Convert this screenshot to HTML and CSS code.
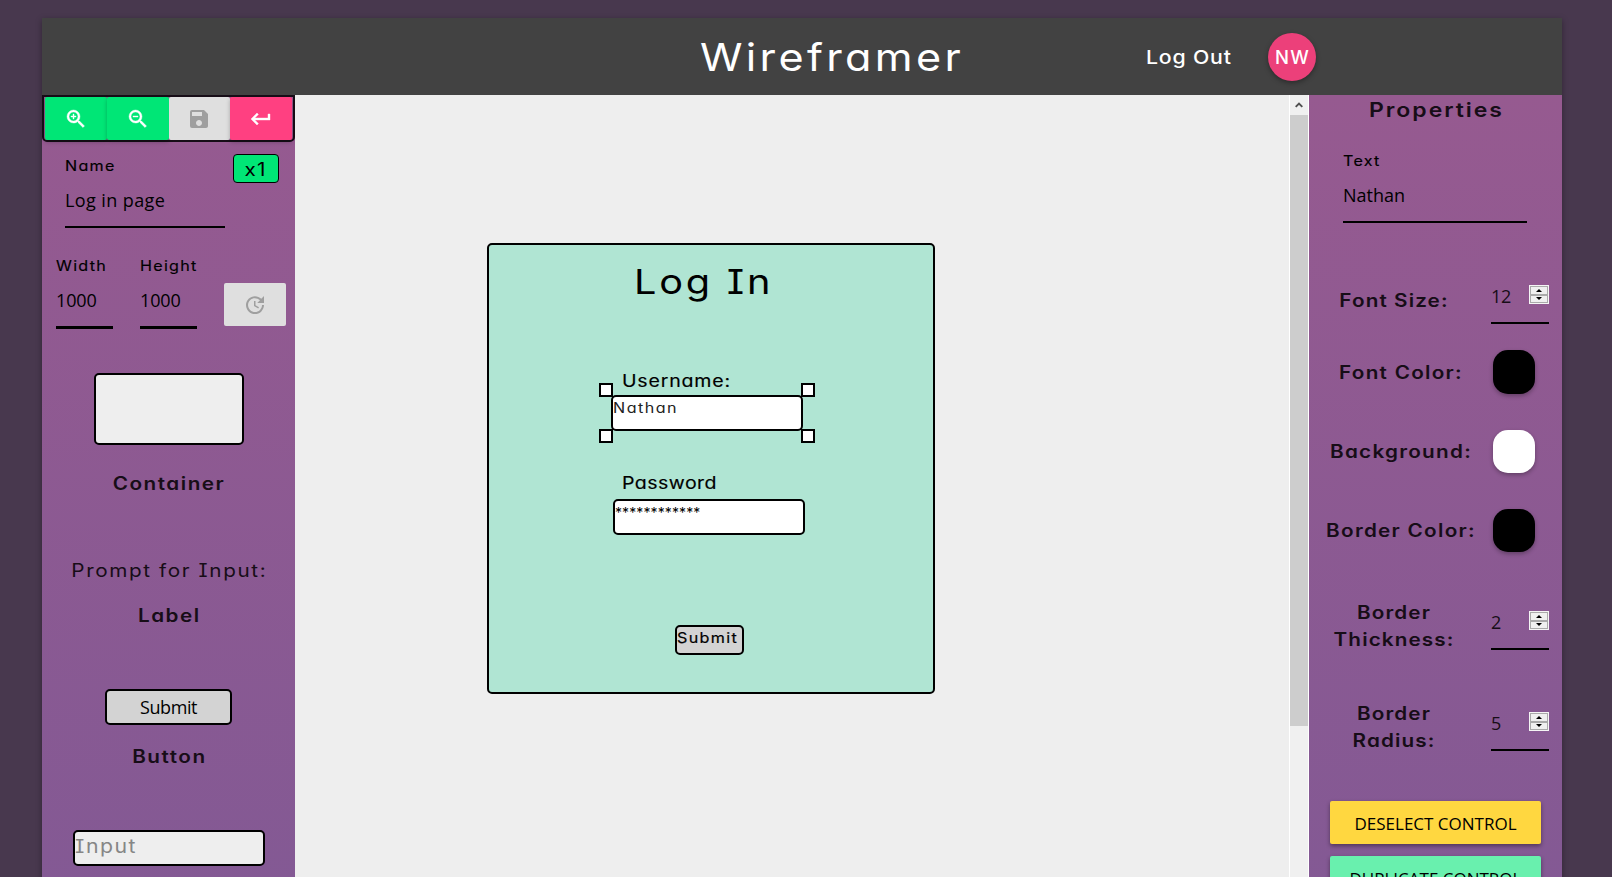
FILE: index.html
```html
<!DOCTYPE html>
<html lang="en">
<head>
<meta charset="utf-8">
<title>Wireframer</title>
<link rel="stylesheet" href="styles.css">
</head>
<body>
<div class="shell">
  <header class="nav">
    <div class="brand wide">Wireframer</div>
    <div class="logout"><span class="wide">Log Out</span></div>
    <div class="avatar">NW</div>
  </header>
  <main class="editor">
    <aside class="panel tools">
      <div class="toolbar">
        <button class="tool green"><svg viewBox="0 0 24 24"><path d="M15.5 14h-.79l-.28-.27A6.47 6.47 0 0 0 16 9.5 6.5 6.5 0 1 0 9.5 16c1.61 0 3.09-.59 4.23-1.57l.27.28v.79l5 4.99L20.49 19l-4.99-5zm-6 0C7.01 14 5 11.99 5 9.5S7.01 5 9.5 5 14 7.01 14 9.5 11.99 14 9.5 14zm2.5-4h-2v2H9v-2H7V9h2V7h1v2h2v1z"/></svg></button>
        <button class="tool green"><svg viewBox="0 0 24 24"><path d="M15.5 14h-.79l-.28-.27A6.47 6.47 0 0 0 16 9.5 6.5 6.5 0 1 0 9.5 16c1.61 0 3.09-.59 4.23-1.57l.27.28v.79l5 4.99L20.49 19l-4.99-5zm-6 0C7.01 14 5 11.99 5 9.5S7.01 5 9.5 5 14 7.01 14 9.5 11.99 14 9.5 14zM7 9h5v1H7z"/></svg></button>
        <button class="tool disabled"><svg viewBox="0 0 24 24"><path d="M17 3H5a2 2 0 0 0-2 2v14a2 2 0 0 0 2 2h14c1.1 0 2-.9 2-2V7l-4-4zm-5 16c-1.66 0-3-1.34-3-3s1.34-3 3-3 3 1.34 3 3-1.34 3-3 3zm3-10H5V5h10v4z"/></svg></button>
        <button class="tool pink"><svg viewBox="0 0 24 24"><path d="M19 7v4H5.83l3.58-3.59L8 6l-6 6 6 6 1.41-1.41L5.83 13H21V7z"/></svg></button>
      </div>
      <div class="name-row">
        <label class="field name-field"><span class="caption wide">Name</span><span class="value page-name">Log in page</span></label>
        <span class="zoom-badge"><span class="wide">x1</span></span>
      </div>
      <div class="size-row">
        <label class="field dim"><span class="caption wide">Width</span><span class="value">1000</span></label>
        <label class="field dim"><span class="caption wide">Height</span><span class="value">1000</span></label>
        <button class="tool disabled refresh"><svg viewBox="0 0 24 24"><path d="M21 10.12h-6.78l2.74-2.82c-2.73-2.7-7.15-2.8-9.88-.1-2.73 2.71-2.73 7.08 0 9.79s7.15 2.71 9.88 0C18.32 15.65 19 14.08 19 12.1h2c0 1.98-.88 4.55-2.64 6.29-3.51 3.48-9.21 3.48-12.72 0-3.5-3.47-3.53-9.11-.02-12.58s9.14-3.47 12.65 0L21 3v7.12zM12.5 8v4.25l3.5 2.08-.72 1.21L11 13V8h1.5z"/></svg></button>
      </div>
      <div class="sample-box"></div>
      <div class="tool-name after-box wide">Container</div>
      <div class="sample-label wide">Prompt for Input:</div>
      <div class="tool-name after-label wide">Label</div>
      <div class="sample-button">Submit</div>
      <div class="tool-name after-button wide">Button</div>
      <div class="sample-input"><span class="wide">Input</span></div>
    </aside>

    <section class="canvas">
      <div class="node frame"></div>
      <div class="node title wide">Log In</div>
      <div class="node user-label wide">Username:</div>
      <div class="node pass-label wide">Password</div>
      <div class="node input user-input"><span class="wide">Nathan</span>
        <i class="handle tl"></i><i class="handle tr"></i><i class="handle bl"></i><i class="handle br"></i>
      </div>
      <div class="node input pass-input">************</div>
      <div class="node input submit"><span class="wide">Submit</span></div>
    </section>
    <div class="scrollbar">
      <div class="scroll-arrow"><svg viewBox="0 0 8 6"><path d="M.7 4.8 4 1.5l3.3 3.3" fill="none" stroke="#505050" stroke-width="1.9"/></svg></div>
      <div class="thumb"></div>
    </div>

    <aside class="panel props">
      <h2 class="heading wide">Properties</h2>
      <label class="field text-field"><span class="caption wide">Text</span><span class="value">Nathan</span></label>
      <div class="prop number size"><span class="prop-name wide">Font Size:</span><span class="num">12<span class="spin"><b></b><b class="down"></b></span></span></div>
      <div class="prop color c1"><span class="prop-name wide">Font Color:</span><span class="swatch black"></span></div>
      <div class="prop color c2"><span class="prop-name wide">Background:</span><span class="swatch white"></span></div>
      <div class="prop color c3"><span class="prop-name wide">Border Color:</span><span class="swatch black"></span></div>
      <div class="prop number thick"><span class="prop-name wide">Border<br>Thickness:</span><span class="num">2<span class="spin"><b></b><b class="down"></b></span></span></div>
      <div class="prop number radius"><span class="prop-name wide">Border<br>Radius:</span><span class="num">5<span class="spin"><b></b><b class="down"></b></span></span></div>
      <button class="action deselect">DESELECT CONTROL</button>
      <button class="action duplicate">DUPLICATE CONTROL</button>
    </aside>
  </main>
</div>
</body>
</html>
```
FILE: styles.css
```css
* { box-sizing: border-box; }
html, body { height: 100%; overflow: hidden; }
body {
  margin: 0;
  padding: 18px 50px 0 42px;
  background: #48384e;
  font-family: Inter, "DejaVu Sans", sans-serif;
  font-feature-settings: "cv11", "cv08", "calt" 0;
  letter-spacing: 1px;
  color: #000;
  white-space: nowrap;
}
button { border: 0; padding: 0; font: inherit; color: inherit; }

.wide { display: inline-block; transform: scaleX(1.15); transform-origin: 0 50%; }

.shell {
  width: 1520px;
  height: 880px;
  box-shadow: 0 2px 6px rgba(0, 0, 0, .35);
}
.nav {
  height: 77px;
  display: flex;
  align-items: center;
  padding-left: 658px;
  background: #424242;
  color: #fff;
}
.brand { width: 446px; padding-top: 1px; font-size: 37.5px; letter-spacing: 2.9px; }
.logout { width: 122px; font-size: 18.5px; font-weight: 450; letter-spacing: .7px; }
.avatar {
  width: 48px;
  height: 48px;
  border-radius: 50%;
  background: #ec407a;
  display: grid;
  place-items: center;
  font-size: 18.5px;
  font-weight: 500;
  letter-spacing: 1.2px;
  text-indent: 1px;
  box-shadow: 0 2px 5px rgba(0, 0, 0, .35);
}
.editor { display: flex; height: 803px; }
.panel {
  display: flex;
  flex-direction: column;
  width: 253px;
  height: 803px;
  overflow: hidden;
  background: linear-gradient(#965a90, #835994);
}
.tools { align-items: center; }

/* Toolbar */
.toolbar {
  width: 253px;
  height: 47px;
  flex: none;
  display: flex;
  padding: 0 1px;
  border: 2px solid #170d17;
  border-radius: 0 0 5px 5px;
}
.tool {
  flex: 1;
  height: 43px;
  border-radius: 2px;
  display: grid;
  place-items: center;
  box-shadow: 0 2px 4px rgba(0, 0, 0, .25);
}
.tool svg { width: 24px; height: 24px; fill: #fff; stroke: #fff; stroke-width: .4px; }
.green { background: #00e676; }
.pink { background: #ff4081; }
.disabled { background: #dfdfdf; box-shadow: none; }
.tool.disabled svg { fill: #9f9f9f; stroke: none; }

/* Underlined fields */
.field { display: flex; flex-direction: column; border-bottom: 2px solid #000; }
.caption { font-size: 14px; line-height: 20px; letter-spacing: 1.1px; -webkit-text-stroke: .15px #000; }
.value, .num, .sample-button, .action {
  font-family: "Open Sans", "Noto Sans", sans-serif;
  letter-spacing: 0;
}
.value { font-size: 18px; line-height: 24px; margin-top: 12px; }
.page-name { letter-spacing: .4px; }
.name-row { width: 253px; height: 88px; flex: none; display: flex; padding-left: 23px; }
.name-field { width: 160px; height: 72px; margin: 14px 8px 0 0; }
.zoom-badge {
  width: 46px;
  height: 29px;
  margin-top: 12px;
  background: #00e676;
  border: 1px solid #000;
  border-radius: 4px;
  font-size: 18px;
  line-height: 29px;
  text-align: center;
}
.zoom-badge .wide { transform-origin: 50% 50%; }
.size-row {
  width: 253px;
  height: 99px;
  flex: none;
  display: flex;
  align-items: flex-start;
  gap: 27px;
  padding: 26px 0 0 14px;
}
.dim { width: 57px; height: 73px; border-bottom-width: 3px; }
.dim .value { letter-spacing: -.15px; }
.refresh { flex: none; width: 62px; margin-top: 27px; }

/* Component samples */
.sample-box {
  flex: none;
  width: 150px;
  height: 72px;
  margin: 44px 0 0 1px;
  border: 2px solid #000;
  border-radius: 5px;
  background: #eee;
}
.tool-name, .sample-label { font-size: 18px; line-height: 24px; color: #170d17; transform-origin: 50% 50%; }
.tool-name { font-weight: 600; letter-spacing: 1.3px; text-indent: 1px; }
.sample-label { margin-top: 63px; letter-spacing: 1.4px; text-indent: 1px; }
.after-box { margin-top: 27px; }
.after-label { margin-top: 21px; }
.sample-button {
  flex: none;
  width: 127px;
  height: 36px;
  margin-top: 61px;
  border: 2px solid #000;
  border-radius: 5px;
  background: #d3d3d3;
  font-size: 18px;
  line-height: 32px;
  text-align: center;
  letter-spacing: -.4px;
}
.after-button { margin-top: 20px; }
.sample-input {
  flex: none;
  width: 192px;
  height: 36px;
  margin-top: 61px;
  border: 2px solid #000;
  border-radius: 5px;
  background: #eee;
  color: #868686;
  font-size: 18.5px;
  line-height: 28px;
  letter-spacing: 1.3px;
}

/* Free canvas */
.canvas { position: relative; width: 994px; background: #eee; }
.node { position: absolute; }
.frame { left: 192px; top: 148px; width: 448px; height: 451px; background: #b0e5d3; border: 2px solid #000; border-radius: 5px; }
.title { left: 339px; top: 167px; font-size: 34.5px; line-height: 40px; letter-spacing: 2.4px; }
.user-label, .pass-label { left: 327px; font-size: 17px; line-height: 21px; letter-spacing: .7px; -webkit-text-stroke: .15px #000; }
.user-label { top: 276px; }
.pass-label { top: 378px; letter-spacing: .4px; }
.input { border: 2px solid #000; border-radius: 5px; background: #fff; width: 192px; height: 36px; font-size: 14px; line-height: 22px; }
.user-input { left: 316px; top: 300px; letter-spacing: 1.3px; color: #222; }
.pass-input { left: 318px; top: 404px; letter-spacing: .1px; line-height: 23px; }
.submit { left: 380px; top: 530px; width: 69px; height: 30px; background: #d3d3d3; letter-spacing: 1.2px; -webkit-text-stroke: .2px #000; }
.handle { position: absolute; width: 14px; height: 14px; border: 2px solid #000; background: #fff; }
.tl { left: -14px; top: -14px; }
.tr { right: -14px; top: -14px; }
.bl { left: -14px; bottom: -14px; }
.br { right: -14px; bottom: -14px; }

.scrollbar { width: 20px; border-left: 1px solid #fff; border-right: 1px solid #fff; background: #f0f0f0; }
.scroll-arrow { height: 20px; display: grid; place-items: center; }
.scroll-arrow svg { width: 8px; height: 6px; }
.thumb { height: 611px; background: #cdcdcd; }

/* Properties */
.heading { margin: 1px 0 0 60px; font-size: 20px; line-height: 28px; font-weight: 600; color: #170d17; letter-spacing: 1.7px; }
.text-field { width: 184px; height: 72px; flex: none; margin: 27px 0 0 34px; }
.prop { flex: none; display: flex; align-items: center; color: #170d17; }
.prop-name { text-align: center; font-size: 18px; line-height: 27px; font-weight: 600; letter-spacing: 1.1px; transform-origin: 50% 50%; }
.number .prop-name { width: 170px; margin-top: -8px; letter-spacing: .95px; }
.color .prop-name { width: 184px; }
.number { height: 54px; }
.size { margin-top: 54px; }
.num {
  position: relative;
  width: 58px;
  height: 40px;
  margin-left: 12px;
  border-bottom: 2px solid #000;
  font-size: 18px;
  line-height: 24px;
  letter-spacing: -.4px;
}
.spin {
  position: absolute;
  right: 0;
  top: 1px;
  width: 20px;
  height: 19px;
  padding: 1px;
  background: #f5f5f5;
  display: flex;
  flex-direction: column;
}
.spin b { flex: 1; border: 1px solid #aaa; background: #f0f0f0; display: grid; place-items: center; }
.spin b::after { content: ""; border: 3px solid transparent; border-top: 0; border-bottom-color: #000; }
.spin .down::after { transform: rotate(180deg); }
.color { height: 43px; }
.swatch { width: 42px; height: 43px; border-radius: 15px; box-shadow: 0 2px 4px rgba(0, 0, 0, .3); }
.c1 .swatch { height: 44px; }
.black { background: #000; }
.white { background: #fff; }
.c1 { height: 44px; margin-top: 19px; }
.c2 { margin-top: 36px; }
.c3 { margin-top: 36px; }
.thick { margin-top: 51px; }
.radius { margin-top: 47px; }
.action {
  flex: none;
  width: 211px;
  height: 43px;
  margin-left: 21px;
  border-radius: 2px;
  font-size: 17px;
  line-height: 45px;
  box-shadow: 0 2px 4px rgba(0, 0, 0, .4);
}
.deselect { margin-top: 43px; background: #ffd740; }
.duplicate { margin-top: 12px; background: #69f0ae; }
```
